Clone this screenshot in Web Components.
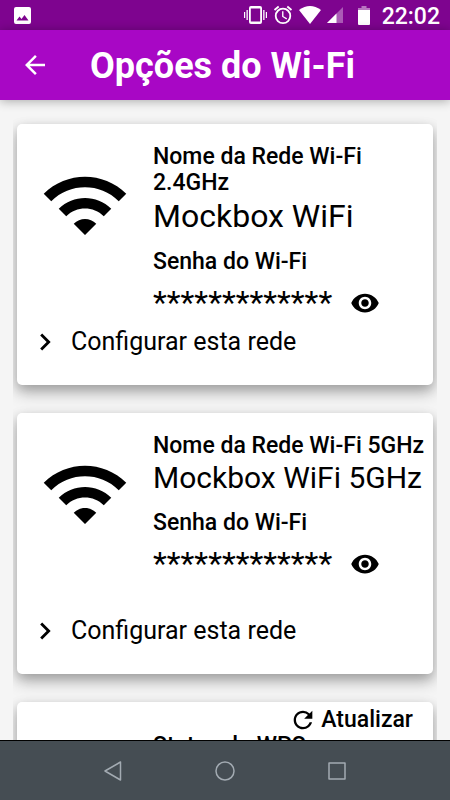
<!DOCTYPE html>
<html lang="pt-BR">
<head>
<meta charset="utf-8">
<meta name="viewport" content="width=device-width, initial-scale=1">
<title>Opções do Wi-Fi</title>
<style>
html, body { height: 100%; margin: 0; }
body { font-family: Roboto, "Liberation Sans", sans-serif; color: #000; background: #f5f5f5; overflow: hidden; }
</style>
</head>
<body>
<wifi-app></wifi-app>
<script>
const define = (name, html) => {
  const template = document.createElement('template');
  template.innerHTML = html;
  customElements.define(name, class extends HTMLElement {
    constructor() {
      super();
      this.attachShadow({ mode: 'open' }).append(template.content.cloneNode(true));
    }
  });
};

define('status-bar', `
<style>
:host { display: flex; align-items: center; justify-content: space-between; height: 30px; padding: 0 10px 0 14px; background: #7e048f; color: #fff; font-size: 23px; line-height: 30px; }
svg { display: block; fill: currentColor; }
.right { display: flex; align-items: center; }
.right svg { margin-right: 6px; }
.right svg.signal { margin-right: 15px; }
.right svg.battery { margin-right: 12px; }
time { font-weight: 500; padding-top: 3px; }
</style>
<svg width="17" height="17" viewBox="0 0 17 17"><path fill-rule="evenodd" d="M2 0h13a2 2 0 0 1 2 2v13a2 2 0 0 1-2 2H2a2 2 0 0 1-2-2V2a2 2 0 0 1 2-2zM2.500 13.500h12L10.500 8 7.500 12 5.500 9.500z"/></svg>
<div class="right">
<svg width="23" height="20" viewBox="0 0 23 20"><path fill-rule="evenodd" d="M7 1h9a2 2 0 0 1 2 2v14a2 2 0 0 1-2 2H7a2 2 0 0 1-2-2V3a2 2 0 0 1 2-2zM6.800 3.500v13h9.400v-13zM2.500 5H3.800v10H2.500zM0 7h1.200v6H0zM19.200 5h1.300v10h-1.300zM21.800 7H23v6h-1.200z"/></svg>
<svg width="20" height="20" viewBox="1 1 22 22"><path d="M22 5.720l-4.600-3.860-1.290 1.530 4.600 3.860zM7.880 3.390L6.600 1.860 2 5.710l1.290 1.530zM12.500 8H11v6l4.750 2.850.75-1.230-4-2.370zM12 4a9 9 0 1 0 0 18 9 9 0 0 0 0-18zm0 16a7 7 0 1 1 0-14 7 7 0 0 1 0 14z"/></svg>
<svg width="22" height="18" viewBox="0 0 22 18"><path d="M0 4Q11-4 22 4L11 18z"/></svg>
<svg class="signal" width="16" height="16" viewBox="0 0 16 16"><path opacity=".35" d="M16 0v16H0z"/><path d="M9.500 6.500V16H0z"/></svg>
<svg class="battery" width="12" height="19" viewBox="0 0 12 19"><path opacity=".45" d="M3.500 0h5v2H12v4H0V2h3.500z"/><path d="M0 4h12v14a1 1 0 0 1-1 1H1a1 1 0 0 1-1-1z"/></svg>
<time>22:02</time>
</div>`);

define('app-header', `
<style>
:host { display: flex; align-items: center; gap: 40px; height: 70px; padding: 0 20px; background: #a807c5; color: #fff; box-shadow: 0 1px 10px rgba(0,0,0,.32); position: relative; }
button { display: block; width: 30px; height: 30px; padding: 0; border: 0; background: none; color: inherit; }
svg { display: block; fill: currentColor; }
h1 { margin: 0; padding-top: 2px; font-size: 36px; line-height: 40px; font-weight: 700; white-space: nowrap; }
</style>
<button type="button" aria-label="Voltar"><svg width="30" height="30" viewBox="0 0 24 24"><path d="M20 11H7.830l5.590-5.590L12 4l-8 8 8 8 1.410-1.410L7.830 13H20z"/></svg></button>
<h1><slot></slot></h1>`);

define('content-card', `
<style>
:host { display: flex; flex-direction: column; box-sizing: border-box; min-height: 261px; background: #fff; border-radius: 5px; box-shadow: 0 8px 16px rgba(0,0,0,.22), 0 4px 12px rgba(0,0,0,.2); padding: 20px 0 26px 23px; }
</style>
<slot></slot>`);

define('wifi-network', `
<style>
:host { display: flex; flex-direction: column; flex: 1; }
.info { display: flex; gap: 23px; }
.icon { flex: none; margin-top: 16px; }
svg { display: block; fill: #000; }
dl, dd, dt { margin: 0; }
dl { flex: 1; min-width: 0; }
dt { font-size: 23px; line-height: 26px; font-weight: 500; padding-right: 8px; }
.name { font-size: var(--name-size, 32px); line-height: var(--name-line, 40px); margin-bottom: 13px; white-space: nowrap; }
.pass { display: flex; align-items: center; gap: 18px; font-size: 32px; line-height: 36px; height: 36px; margin-top: 9px; }
button { font: inherit; color: inherit; background: none; border: 0; padding: 0; }
.pass button { padding-top: 2px; }
.config { display: flex; align-items: center; gap: 9px; margin: auto auto 0 -12px; font-size: 25px; line-height: 34px; }
</style>
<div class="info">
<svg class="icon" width="90" height="90" viewBox="0 0 24 24"><path d="M1 9l2 2c4.970-4.970 13.030-4.970 18 0l2-2C16.930 2.930 7.080 2.930 1 9zm8 8l3 3 3-3c-1.650-1.660-4.340-1.660-6 0zm-4-4l2 2c2.760-2.760 7.240-2.760 10 0l2-2C15.140 9.140 8.870 9.140 5 13z"/></svg>
<dl>
<dt><slot name="label"></slot></dt>
<dd class="name"><slot name="name"></slot></dd>
<dt>Senha do Wi-Fi</dt>
<dd class="pass"><span>*************</span><button type="button" aria-label="Mostrar senha"><svg width="30" height="30" viewBox="0 0 24 24"><path d="M12 4.500C7 4.500 2.730 7.610 1 12c1.730 4.390 6 7.500 11 7.500s9.270-3.110 11-7.500c-1.730-4.390-6-7.500-11-7.500zM12 17c-2.760 0-5-2.240-5-5s2.240-5 5-5 5 2.240 5 5-2.240 5-5 5zm0-8c-1.660 0-3 1.340-3 3s1.340 3 3 3 3-1.340 3-3-1.340-3-3-3z"/></svg></button></dd>
</dl>
</div>
<button type="button" class="config"><svg width="34" height="34" viewBox="0 0 24 24"><path d="M10 6L8.590 7.410 13.170 12l-4.580 4.590L10 18l6-6z"/></svg><span>Configurar esta rede</span></button>`);

define('wps-status', `
<style>
:host { display: flex; flex-direction: column; margin-top: -18px; }
button { display: flex; align-items: center; gap: 4px; align-self: flex-end; margin-right: 20px; border: 0; padding: 0; background: none; color: inherit; font: inherit; font-weight: 500; font-size: 23px; line-height: 32px; }
svg { display: block; }
h2 { margin: -3px 0 0 113px; font-size: 23px; line-height: 26px; font-weight: 500; }
</style>
<button type="button"><svg width="28" height="28" viewBox="0 0 24 24"><path d="M17.650 6.350A7.958 7.958 0 0 0 12 4c-4.420 0-7.990 3.580-7.990 8s3.570 8 7.990 8c3.730 0 6.840-2.550 7.730-6h-2.080A5.990 5.990 0 0 1 12 18c-3.310 0-6-2.690-6-6s2.690-6 6-6c1.660 0 3.140.69 4.220 1.780L13 11h7V4z"/></svg>Atualizar</button>
<h2>Status do WPS</h2>`);

define('nav-bar', `
<style>
:host { display: flex; justify-content: center; align-items: center; gap: 82px; height: 59px; border-top: 1px solid #000; background: #454d53; position: relative; }
button { display: block; border: 0; padding: 0; background: none; }
svg { display: block; fill: none; stroke: #a3abb2; stroke-width: 1.500; stroke-linejoin: round; }
</style>
<button type="button" aria-label="Voltar"><svg width="30" height="30" viewBox="0 0 30 30"><path d="M22.500 6v18L7 15z"/></svg></button>
<button type="button" aria-label="Início"><svg width="30" height="30" viewBox="0 0 30 30"><circle cx="15" cy="15" r="9"/></svg></button>
<button type="button" aria-label="Recentes"><svg width="30" height="30" viewBox="0 0 30 30"><path d="M7 7h16v16H7z"/></svg></button>`);

define('wifi-app', `
<style>
:host { display: flex; flex-direction: column; height: 100vh; }
status-bar, app-header, nav-bar { flex: none; }
app-header { z-index: 1; }
main { flex: 1; min-height: 0; overflow: hidden; display: flex; flex-direction: column; gap: 28px; margin: 0 13px; padding: 24px 4px 0; }
content-card { flex: none; }
.compact { --name-size: 30px; --name-line: 38px; }
</style>
<status-bar></status-bar>
<app-header>Opções do Wi-Fi</app-header>
<main>
<content-card><wifi-network><span slot="label">Nome da Rede Wi-Fi 2.4GHz</span><span slot="name">Mockbox WiFi</span></wifi-network></content-card>
<content-card><wifi-network class="compact"><span slot="label">Nome da Rede Wi-Fi 5GHz</span><span slot="name">Mockbox WiFi 5GHz</span></wifi-network></content-card>
<content-card><wps-status></wps-status></content-card>
</main>
<nav-bar></nav-bar>`);
</script>
</body>
</html>
